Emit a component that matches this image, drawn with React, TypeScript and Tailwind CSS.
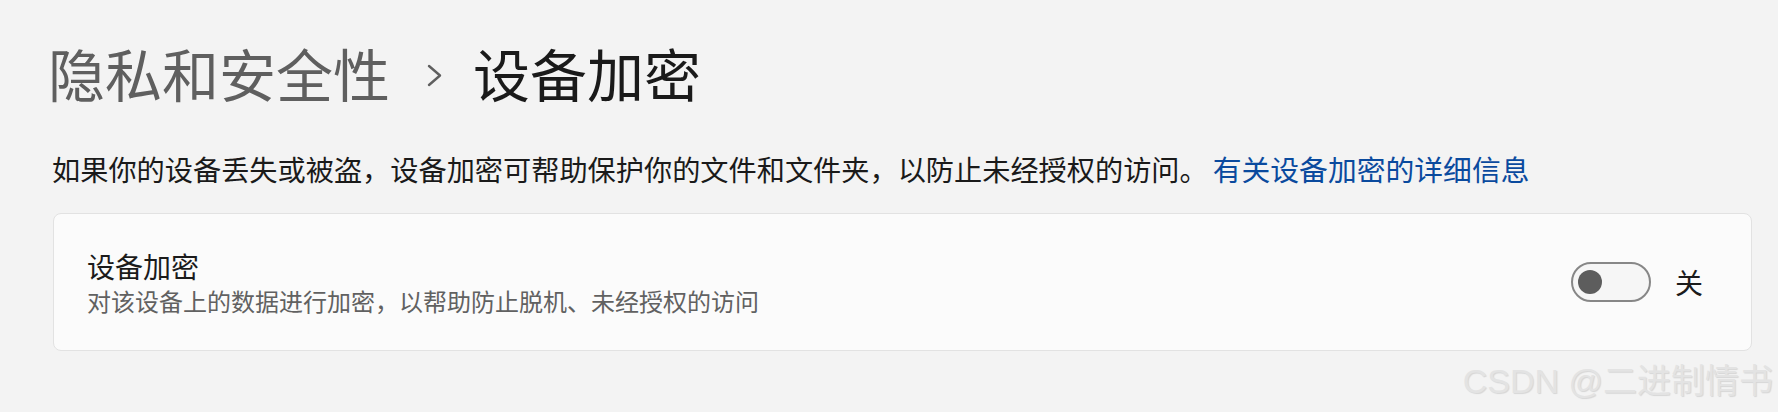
import React from "react";

function ToggleOff() {
  return (
    <div className="flex items-center w-[80px] h-[40px] rounded-full border-2 border-[#878787] bg-[#f6f6f6] pl-[5px]">
      <span className="block w-[24px] h-[24px] rounded-full bg-[#5d5d5d]" />
    </div>
  );
}

function Chevron() {
  return (
    <svg width="16" height="24" viewBox="0 0 16 24" className="ml-[37px] mr-[30px] mt-[4px]" aria-hidden>
      <polyline
        points="2,3 13,12.5 2,22"
        fill="none"
        stroke="#5f5f5f"
        strokeWidth="2.4"
        strokeLinecap="round"
        strokeLinejoin="round"
      />
    </svg>
  );
}

export default function App() {
  return (
    <div className="relative w-full min-h-[412px] overflow-hidden bg-[#f3f3f3] font-['Noto_Sans_CJK_SC','Liberation_Sans',sans-serif]">
      <div className="pl-[52px] pr-[26px] pt-[44px]">
        {/* breadcrumb header */}
        <h1 className="flex items-center -ml-[4px] text-[57px] leading-[57px] font-normal">
          <span className="text-[#5f5f5f]">隐私和安全性</span>
          <Chevron />
          <span className="text-[#1a1a1a]">设备加密</span>
        </h1>

        <p className="mt-[48px] flex items-center leading-[40px] whitespace-nowrap">
          <span className="text-[28.2px] text-[#1a1a1a]">
            如果你的设备丢失或被盗，设备加密可帮助保护你的文件和文件夹，以防止未经授权的访问。
          </span>
          <a href="#" className="ml-[5px] text-[28.8px] text-[#0a4a9e]">
            有关设备加密的详细信息
          </a>
        </p>

        {/* setting card */}
        <div className="mt-[24px] ml-[1px] flex items-center h-[138px] rounded-[8px] border border-[#e2e2e2] bg-[#fbfbfb] pl-[33px] pr-[48px]">
          <div className="flex-1 flex flex-col">
            <span className="text-[28px] leading-[38px] text-[#1b1b1b]">设备加密</span>
            <span className="text-[24px] leading-[32px] text-[#616161]">
              对该设备上的数据进行加密，以帮助防止脱机、未经授权的访问
            </span>
          </div>
          <ToggleOff />
          <span className="ml-[24px] text-[28px] leading-[38px] text-[#1b1b1b]">关</span>
        </div>
      </div>

      <span className="absolute right-[5px] bottom-[14px] text-[34px] leading-none text-[#e3e3e3] [text-shadow:1px_1px_1px_rgba(0,0,0,0.12)] font-['Liberation_Sans','Noto_Sans_CJK_SC',sans-serif] whitespace-nowrap">
        CSDN @二进制情书
      </span>
    </div>
  );
}
